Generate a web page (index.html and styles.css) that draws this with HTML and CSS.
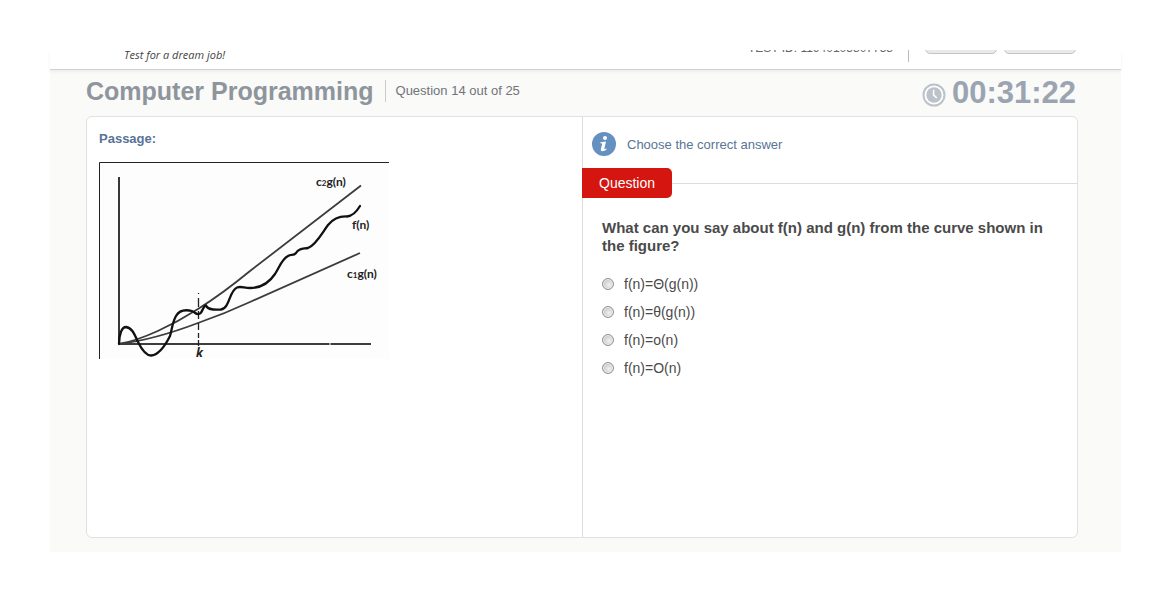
FILE: index.html
```html
<!DOCTYPE html>
<html lang="en">
<head>
<meta charset="utf-8">
<meta name="viewport" content="width=device-width, initial-scale=1">
<title>Computer Programming</title>
<link rel="stylesheet" href="styles.css">
</head>
<body>
<div class="app">
  <header class="topbar">
    <p class="tagline"><span class="logo-edge"></span>Test for a dream job!</p>
    <div class="session">
      <span class="test-id">TEST ID: 11940103807738</span>
      <span class="session-divider"></span>
      <button class="top-button" type="button" aria-label="Help"></button>
      <button class="top-button" type="button" aria-label="Finish test"></button>
    </div>
  </header>

  <div class="titlebar">
    <h1 class="title">Computer Programming</h1>
    <span class="progress">Question 14 out of 25</span>
    <div class="timer">
      <svg class="clock" viewBox="0 0 24 24" aria-hidden="true">
        <circle cx="12" cy="12" r="10.5" fill="#fff" stroke="#bbc2ca" stroke-width="2"/>
        <circle cx="12" cy="12" r="7.7" fill="#bbc2ca"/>
        <path d="M11.6 6.8V12.2L14.8 14.8" fill="none" stroke="#fff" stroke-width="1.5"/>
      </svg>
      <span>00:31:22</span>
    </div>
  </div>

  <main class="panel">
    <section class="passage">
      <h2 class="passage-title">Passage:</h2>
      <svg class="figure" viewBox="0 0 290 197" role="img" aria-label="Curve f(n) lying between c1g(n) and c2g(n) beyond k">
        <rect width="290" height="197" fill="#fdfdfd"/>
        <path d="M.5 197V.5H290" fill="none" stroke="#222"/>
        <g fill="none" stroke="#3c3c3c">
          <path d="M20 15V182" stroke="#222" stroke-width="1.8"/>
          <path d="M20 182H230.500M231.500 182H272" stroke-width="2"/>
          <path d="M20 182C43 178 74 163 99 147Q123 132 151 109L262 23.500" stroke-width="1.8"/>
          <path d="M20 182C45 179 70 172 99 161Q125 152 151 140L261 91" stroke-width="1.8"/>
          <path d="M99.500 131V132M99.500 136V145M99.500 149V157M99.500 161V168M99.500 171V176M99.500 178V184" stroke="#222" stroke-width="1.3"/>
        </g>
        <path d="M20 182C20 172 23 165 27 165C33 166 35 171 39 180C43 188 47 193.500 52 193.500C60 193 66 184 71 174C73 168 73 161 77 154C81 147 89 148 93 149C96 150 97 153 100 152C104 151 104 143 107 143.500C109 148 115 148 122 147.500C131 146 130 129 138 125.500C142 124 145 126 151 126C162 126 170 121 176 112C181 104 183 97 189 94C192 92 195 94 197 91C200 86 204 87 209 86C217 83 223 71 229 63C234 57 239 54 248 54.500C254 54 258 49 261 44" fill="none" stroke="#111" stroke-width="2.3" stroke-linecap="round"/>
        <g class="curve-label">
          <text x="217" y="24">c<tspan class="sub">2</tspan>g(n)</text>
          <text x="253" y="67">f(n)</text>
          <text x="248" y="116">c<tspan class="sub">1</tspan>g(n)</text>
        </g>
        <text class="axis-label" x="97" y="195">k</text>
      </svg>
    </section>

    <section class="question">
      <div class="instruction">
        <svg class="info" viewBox="0 0 24 24" aria-hidden="true">
          <circle cx="12" cy="12" r="12" fill="#6690bf"/>
          <circle cx="13" cy="6" r="2" fill="#fff"/>
          <path d="M8.500 10.200L14 9.400L12.300 16.700Q12 18 14.300 16.500L14.700 17.200Q12.500 19.400 10.200 19.200Q8.300 19 9 16.500L10.300 11.500L8.300 11.200Z" fill="#fff"/>
        </svg>
        <span>Choose the correct answer</span>
      </div>
      <div class="tag-row"><h2 class="tag">Question</h2></div>
      <form class="quiz">
        <fieldset class="options">
          <legend class="prompt">What can you say about f(n) and g(n) from the curve shown in the figure?</legend>
          <label class="option"><input class="radio" type="radio" name="answer">f(n)=Θ(g(n))</label>
          <label class="option"><input class="radio" type="radio" name="answer">f(n)=θ(g(n))</label>
          <label class="option"><input class="radio" type="radio" name="answer">f(n)=o(n)</label>
          <label class="option"><input class="radio" type="radio" name="answer">f(n)=O(n)</label>
        </fieldset>
      </form>
    </section>
  </main>
</div>
</body>
</html>
```

FILE: styles.css
```css
* {
  box-sizing: border-box;
}

body {
  margin: 0;
  padding: 50px;
  background: #fff;
  font-family: "Liberation Sans", Arial, sans-serif;
  font-size: 14px;
  color: #4a4a4a;
}

h1, h2, p {
  margin: 0;
}

.app {
  display: flex;
  flex-direction: column;
  min-height: calc(100vh - 100px);
  padding-bottom: 14px;
  background: #fafaf8;
}

.topbar {
  display: flex;
  justify-content: space-between;
  align-items: flex-end;
  height: 20px;
  padding: 0 45px 0 47px;
  overflow: hidden;
  background: #fff;
  border-bottom: 1px solid #cfd2d2;
  box-shadow: 0 2px 3px #eeeeec;
}

.tagline {
  display: flex;
  gap: 14px;
  padding-bottom: 7px;
  font: italic 500 11px/14px "Open Sans", sans-serif;
  color: #444;
}

.logo-edge {
  width: 13px;
  height: 1px;
  background: #e4e4e4;
}

.session {
  display: flex;
  align-items: flex-end;
}

.test-id {
  padding-bottom: 13px;
  font-size: 12px;
  line-height: 16px;
  color: #666;
}

.session-divider {
  width: 1px;
  height: 30px;
  margin: 0 16px 7px 15px;
  background: #bbb;
}

.top-button {
  width: 72px;
  height: 26px;
  margin: 0 0 15px;
  border: 1px solid #c4c4c4;
  border-radius: 5px;
  background: #e9e9e9;
}

.top-button + .top-button {
  margin-left: 7px;
}

.titlebar {
  display: flex;
  align-items: center;
  height: 46px;
  padding: 0 45px 4px 36px;
}

.title {
  font-size: 25px;
  line-height: 30px;
  color: #8e959c;
}

.progress {
  margin-left: 11px;
  padding-left: 10px;
  border-left: 1px solid #ccc;
  font-size: 13px;
  line-height: 22px;
  color: #707478;
}

.timer {
  display: flex;
  align-items: center;
  gap: 6px;
  margin-left: auto;
  padding-top: 4px;
  font-size: 31px;
  font-weight: bold;
  line-height: 32px;
  color: #9ba5b1;
}

.clock {
  width: 24px;
  height: 24px;
  margin-top: 4px;
}

.panel {
  display: grid;
  grid-template-columns: 1fr 1fr;
  flex: 1;
  margin: 0 43px 0 36px;
  border: 1px solid #dfe1e3;
  border-radius: 6px;
  background: #fff;
}

.passage {
  padding: 13px 12px;
}

.passage-title {
  margin-bottom: 14px;
  font-size: 13px;
  line-height: 18px;
  color: #587298;
}

.figure {
  display: block;
  width: 290px;
  max-width: 100%;
}

.curve-label {
  font: bold 12px Lato, sans-serif;
  fill: #222;
}

.sub {
  font-size: 8px;
}

.axis-label {
  font: italic bold 12px "Open Sans", sans-serif;
  fill: #222;
}

.question {
  border-left: 1px solid #dcdcdc;
}

.instruction {
  display: flex;
  align-items: center;
  gap: 11px;
  padding: 15px 9px 12px;
  font-size: 13px;
  color: #587594;
}

.info {
  width: 24px;
  height: 24px;
}

.tag-row {
  display: flex;
  align-items: center;
}

.tag-row::after {
  content: "";
  flex: 1;
  height: 1px;
  background: #ddd;
}

.tag {
  margin-left: -1px;
  padding: 6px 17px;
  border-radius: 0 5px 5px 0;
  background: #d5150f;
  font-size: 14px;
  font-weight: normal;
  line-height: 18px;
  color: #fff;
}

.quiz {
  padding: 21px 19px;
}

.options {
  margin: 0;
  padding: 0;
  border: 0;
}

.prompt {
  margin-bottom: 20px;
  padding: 0;
  font-size: 15px;
  font-weight: bold;
  line-height: 18px;
}

.option {
  display: flex;
  align-items: center;
  gap: 10px;
  margin-bottom: 10px;
  line-height: 18px;
}

.radio {
  appearance: none;
  width: 12px;
  height: 12px;
  margin: 0;
  border: 1px solid #929292;
  border-radius: 50%;
  background: radial-gradient(circle at 60% 60%, #f2f2f2, #c8c8c8 70%);
  box-shadow: inset 0 0 0 1px #eee;
}

.radio:checked {
  background: radial-gradient(circle, #333 30%, #ddd 35%);
}

@media (max-width: 760px) {
  .panel {
    grid-template-columns: 1fr;
  }
}
```
